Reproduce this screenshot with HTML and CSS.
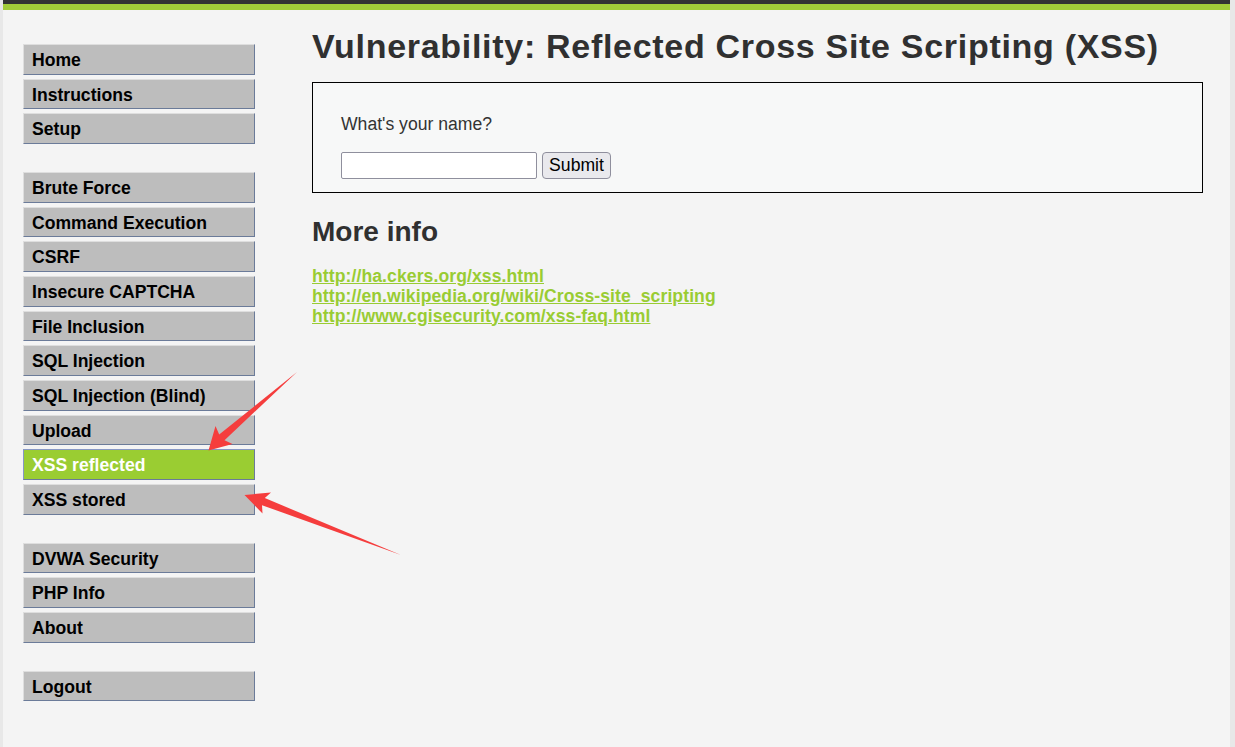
FILE: index.html
```html
<!DOCTYPE html>
<html lang="en">
<head>
<meta charset="utf-8">
<title>DVWA - XSS reflected</title>
<link rel="stylesheet" href="styles.css">
</head>
<body>
<div class="page">
  <div class="topbar"></div>
  <div class="layout">
    <nav class="menu">
      <ul class="group">
        <li><a class="item" href="#">Home</a></li>
        <li><a class="item" href="#">Instructions</a></li>
        <li><a class="item" href="#">Setup</a></li>
      </ul>
      <ul class="group">
        <li><a class="item" href="#">Brute Force</a></li>
        <li><a class="item" href="#">Command Execution</a></li>
        <li><a class="item" href="#">CSRF</a></li>
        <li><a class="item" href="#">Insecure CAPTCHA</a></li>
        <li><a class="item" href="#">File Inclusion</a></li>
        <li><a class="item" href="#">SQL Injection</a></li>
        <li><a class="item" href="#">SQL Injection (Blind)</a></li>
        <li><a class="item" href="#">Upload</a></li>
        <li><a class="item selected" href="#">XSS reflected</a></li>
        <li><a class="item" href="#">XSS stored</a></li>
      </ul>
      <ul class="group">
        <li><a class="item" href="#">DVWA Security</a></li>
        <li><a class="item" href="#">PHP Info</a></li>
        <li><a class="item" href="#">About</a></li>
      </ul>
      <ul class="group">
        <li><a class="item" href="#">Logout</a></li>
      </ul>
    </nav>
    <main class="content">
      <h1 class="title">Vulnerability: Reflected Cross Site Scripting (XSS)</h1>
      <div class="code-area">
        <form class="form" onsubmit="return false">
          <p class="label">What's your name?</p>
          <div class="row">
            <input class="field" type="text" name="name">
            <button class="submit" type="submit">Submit</button>
          </div>
        </form>
      </div>
      <h2 class="subtitle">More info</h2>
      <ul class="links">
        <li><a class="link" href="#">http://ha.ckers.org/xss.html</a></li>
        <li><a class="link" href="#">http://en.wikipedia.org/wiki/Cross-site_scripting</a></li>
        <li><a class="link" href="#">http://www.cgisecurity.com/xss-faq.html</a></li>
      </ul>
    </main>
  </div>
  <svg class="arrows" width="1235" height="747" viewBox="0 0 1235 747" aria-hidden="true">
    <polygon fill="#f53d3d" points="297,372 224.5,440.2 232.5,444 208.5,450.5 215.5,426 219.2,434.6"/>
    <polygon fill="#f53d3d" points="401,555 262,505.2 262.5,513.5 244.5,495 271,492.5 264.8,498.1"/>
  </svg>
</div>
</body>
</html>
```

FILE: styles.css
```css
* {
  box-sizing: border-box;
}

html, body {
  margin: 0;
  padding: 0;
  height: 100%;
}

body {
  background: #e8e8e8;
  font-family: "Liberation Sans", Arial, sans-serif;
  font-size: 17.6px;
  color: #000;
}

.page {
  position: relative;
  width: 1235px;
  height: 747px;
  overflow: hidden;
}

.topbar {
  height: 10px;
  margin-left: 3px;
  width: 1227px;
  background: #a2cc39;
  border-top: 4px solid #333333;
}

.layout {
  display: flex;
  margin-left: 3px;
  width: 1227px;
  height: 737px;
  background: #f4f4f4;
  padding: 0 27px 0 20px;
}

.menu {
  width: 232px;
  flex: none;
  display: flex;
  flex-direction: column;
  gap: 28px;
  padding-top: 34px;
}

.group {
  list-style: none;
  margin: 0;
  padding: 0;
  display: flex;
  flex-direction: column;
  gap: 4px;
}

.item {
  display: block;
  height: 30.67px;
  padding: 5px 0 3px 8px;
  line-height: 20.67px;
  font-weight: bold;
  color: #000;
  text-decoration: none;
  background: #bdbdbd;
  border: 1px solid;
  border-color: #dedede #6b7b99 #6b7b99 #dedede;
}

.item.selected {
  background: #9acd32;
  color: #fff;
  border-color: #8797c4 #6b7b99 #6b7b99 #8797c4;
}

.content {
  flex: 1;
  margin-left: 57px;
  padding-top: 17px;
}

.title {
  margin: 0;
  font-size: 34px;
  letter-spacing: 0.7px;
  line-height: 39.6px;
  font-weight: bold;
  color: #303030;
}

.code-area {
  margin-top: 15.4px;
  border: 1px solid #000;
  background: #f7f8f8;
  padding: 31.4px 28px 13px;
}

.form {
  margin: 0;
}

.label {
  margin: 0;
  line-height: 21px;
  color: #333;
}

.row {
  display: flex;
  align-items: center;
  margin-top: 16.6px;
}

.field {
  width: 196px;
  height: 27px;
  margin: 0;
  border: 1px solid #8f8f9d;
  border-radius: 2px;
  background: #fff;
  font-family: inherit;
  font-size: 15px;
}

.submit {
  margin: 0 0 0 5px;
  height: 27px;
  width: 69px;
  padding: 0;
  font-family: inherit;
  font-size: 17.6px;
  color: #000;
  background: #e9e9ed;
  border: 1px solid #8f8f9d;
  border-radius: 4px;
}

.subtitle {
  margin: 21.8px 0 0;
  font-size: 28px;
  line-height: 1.2;
  font-weight: bold;
  color: #303030;
}

.links {
  list-style: none;
  margin: 17.2px 0 0;
  padding: 0;
}

.links li {
  line-height: 20px;
}

.link {
  color: #99cc33;
  font-weight: bold;
  letter-spacing: 0.08px;
  text-decoration: underline;
}

.arrows {
  position: absolute;
  left: 0;
  top: 0;
  pointer-events: none;
}
```
